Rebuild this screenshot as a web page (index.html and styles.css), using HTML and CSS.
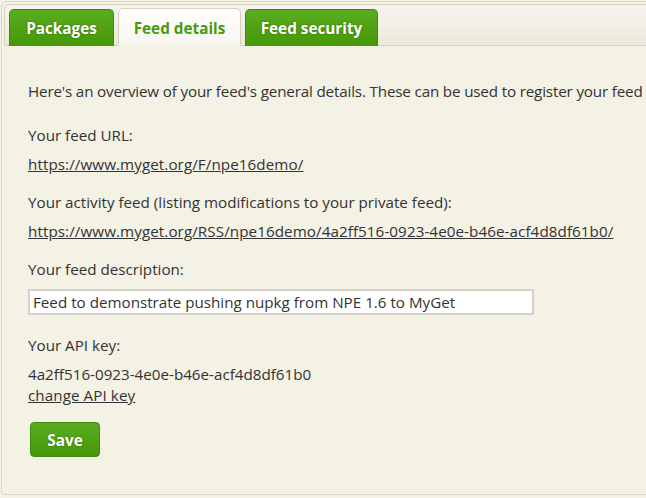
FILE: index.html
```html
<!DOCTYPE html>
<html>
<head>
<meta charset="utf-8">
<link rel="stylesheet" href="styles.css">
</head>
<body>
<div class="panel">
  <div class="tabbar">
    <div class="tab">Packages</div>
    <div class="tab active">Feed details</div>
    <div class="tab">Feed security</div>
  </div>
  <div class="content">
    <p class="intro">Here's an overview of your feed's general details. These can be used to register your feed</p>
    <p class="label">Your feed URL:</p>
    <p class="value"><a href="#">https://www.myget.org/F/npe16demo/</a></p>
    <p class="label">Your activity feed (listing modifications to your private feed):</p>
    <p class="value"><a href="#">https://www.myget.org/RSS/npe16demo/4a2ff516-0923-4e0e-b46e-acf4d8df61b0/</a></p>
    <p class="label">Your feed description:</p>
    <input class="desc" type="text" value="Feed to demonstrate pushing nupkg from NPE 1.6 to MyGet">
    <p class="label api">Your API key:</p>
    <p class="value">4a2ff516-0923-4e0e-b46e-acf4d8df61b0<br><a href="#">change API key</a></p>
    <button class="save">Save</button>
  </div>
</div>
</body>
</html>
```
FILE: styles.css
```css
html, body {
  margin: 0;
  padding: 0;
  background: #f4f1e5;
  overflow: hidden;
}
body {
  font-family: "Open Sans", "Noto Sans", sans-serif;
  font-size: 15.2px;
  color: #333;
}
.panel {
  margin: 1px 0 0 1px;
  width: 700px;
  height: 494px;
  border: 1px solid #dcd7c4;
  border-radius: 5px;
  padding: 2px;
  background: #f4f1e5;
  box-sizing: border-box;
}
.tabbar {
  display: flex;
  align-items: flex-end;
  gap: 4px;
  height: 42px;
  box-sizing: border-box;
  padding: 4px 4px 0;
  border: 1px solid #d8d2bd;
  border-radius: 4px 4px 0 0;
  background: linear-gradient(#f6f4ee 0%, #f2efe6 50%, #ebe7db 100%);
  margin-right: -10px;
}
.tab {
  height: 37px;
  box-sizing: border-box;
  margin-bottom: -1px;
  display: flex;
  align-items: center;
  justify-content: center;
  border: 1px solid #3f8c08;
  border-bottom: none;
  border-radius: 5px 5px 0 0;
  background: linear-gradient(#5aac22, #469806);
  color: #fff;
  font-weight: 700;
  font-size: 15.3px;
  text-shadow: 0 0 2px rgba(40, 90, 0, 0.7);
}
.tab:nth-child(1) { width: 105px; }
.tab:nth-child(2) { width: 123px; }
.tab:nth-child(3) { width: 133px; }
.tab.active {
  background: linear-gradient(#ffffff, #f7f5ee);
  border: 1px solid #d6d0bb;
  border-bottom: none;
  color: #4a9b0c;
  text-shadow: none;
  height: 38px;
  margin-bottom: -1px;
}
.content {
  padding: 35px 0 0 24px;
  line-height: 21px;
}
.content p {
  margin: 0;
  white-space: nowrap;
}
.intro {
  margin-bottom: 23px !important;
  letter-spacing: -0.16px;
}
.label + .value {
  margin-top: 8px !important;
}
.value + .label {
  margin-top: 17px !important;
}
.value a {
  color: #333;
  text-decoration: underline;
  letter-spacing: 0.08px;
}
.desc {
  display: block;
  margin-top: 9px;
  width: 506px;
  height: 26px;
  box-sizing: border-box;
  border: 2px solid #d3d0cb;
  background: #fff;
  padding: 0 3px;
  font-family: "Open Sans", "Noto Sans", sans-serif;
  font-size: 15.2px;
  color: #333;
  outline: none;
}
.label.api {
  margin-top: 20px !important;
}
.save {
  display: block;
  margin: 16px 0 0 2px;
  width: 70px;
  height: 35px;
  border: 1px solid #3f8c08;
  border-radius: 4px;
  background: linear-gradient(#5aac22, #469806);
  color: #fff;
  font-family: "Open Sans", "Noto Sans", sans-serif;
  font-weight: 700;
  font-size: 15.3px;
  text-shadow: 0 0 2px rgba(40, 90, 0, 0.7);
  padding: 0;
}
```
